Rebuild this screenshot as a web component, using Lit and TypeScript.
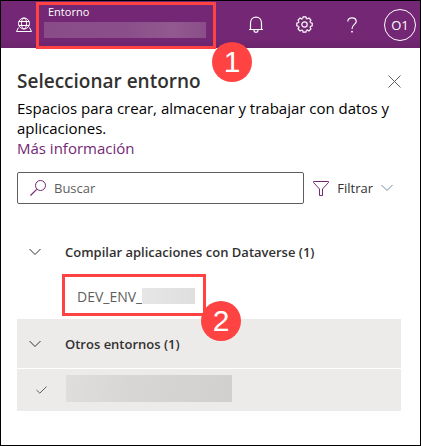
import { LitElement, html, css, svg } from "lit";
import { customElement } from "lit/decorators.js";

const chevron = html`<svg class="chevron" width="12" height="8" viewBox="0 0 12 8" aria-hidden="true">
  <path d="M0.5 1 L6 6.5 L11.5 1" fill="none" stroke="currentColor" />
</svg>`;

const gearTeeth = [0, 45, 90, 135, 180, 225, 270, 315].map(
  (a) => svg`<path transform="rotate(${a} 8.5 8.5)"
    d="M6.6 2.6 L7.1 0.8 H9.9 L10.4 2.6 L11.3 3" />`
);

@customElement("app-header")
export class AppHeader extends LitElement {
  static styles = css`
    :host {
      display: flex;
      align-items: center;
      height: 47px;
      box-sizing: border-box;
      padding: 0 4px 0 15px;
      background: linear-gradient(#742774 80%, #6b246b);
      color: #fff;
    }
    button {
      border: 0;
      padding: 0;
      background: none;
      color: inherit;
      font: inherit;
      cursor: pointer;
    }
    svg {
      display: block;
      fill: none;
      stroke: currentColor;
    }
    .globe {
      flex: none;
      margin-right: 4px;
    }
    .environment {
      position: relative;
      box-sizing: border-box;
      flex: 0 1 180px;
      height: 47px;
      margin-top: 2px;
      border: 3px solid #ff4343;
      text-align: left;
      display: flex;
      flex-direction: column;
      padding: 0 7px 0 5px;
    }
    .label {
      font-size: 11px;
      line-height: 14px;
      padding-left: 4px;
      margin-bottom: 3px;
    }
    .masked {
      height: 16px;
      background: linear-gradient(90deg, #894c89, #8a4f8b 50%, #91598f 80%, #8a4d89);
    }
    .badge {
      position: absolute;
      right: -39px;
      top: 37px;
    }
    .actions {
      flex: 1;
      display: flex;
      align-items: center;
      justify-content: flex-end;
    }
    .action {
      width: 48px;
      height: 47px;
      display: grid;
      place-items: center;
    }
    .avatar {
      box-sizing: border-box;
      width: 32px;
      height: 32px;
      margin-left: 8px;
      border: 1px solid #fff;
      border-radius: 50%;
      font-size: 13px;
    }
  `;

  render() {
    return html`
      <svg class="globe" width="16" height="16" viewBox="0 0 16 16" aria-hidden="true">
        <circle cx="8" cy="6.5" r="5.5" />
        <ellipse cx="8" cy="6.5" rx="2.5" ry="5.5" />
        <path d="M2.8 4.5 H13.2 M2.8 8.5 H13.2 M2.5 10.5 L0.5 14.5 H15.5 L13.5 10.5" />
      </svg>
      <button class="environment">
        <span class="label">Entorno</span>
        <span class="masked"></span>
        <step-badge class="badge" number="1"></step-badge>
      </button>
      <div class="actions">
        <button class="action" aria-label="Notificaciones">
          <svg width="16" height="18" viewBox="0 0 16 18">
            <path d="M1 13.5 H15 M2.5 13.5 V7 C2.5 3.5 5 1.2 8 1.2 S13.5 3.5 13.5 7 V13.5 M6 14 C6 17 10 17 10 14" stroke-width="1.2" />
          </svg>
        </button>
        <button class="action" aria-label="Configuración">
          <svg width="17" height="17" viewBox="0 0 17 17" stroke-width="1.2">
            ${gearTeeth}
            <circle cx="8.5" cy="8.5" r="2.7" />
          </svg>
        </button>
        <button class="action" aria-label="Ayuda">
          <svg width="10" height="16" viewBox="0 0 10 16">
            <path d="M0.8 4.5 C0.8 2 2.5 0.8 5 0.8 S9.2 2.2 9.2 4.4 C9.2 7.5 5 7.5 5 12" stroke-width="1.2" />
            <circle cx="5" cy="14.7" r="0.9" fill="currentColor" stroke="none" />
          </svg>
        </button>
        <button class="avatar">O1</button>
      </div>
    `;
  }
}

@customElement("step-badge")
export class StepBadge extends LitElement {
  static properties = { number: { type: String } };
  declare number: string;

  static styles = css`
    :host {
      display: grid;
      place-items: center;
      width: 40px;
      height: 40px;
      border-radius: 50%;
      background: #ff4343;
      color: #fff;
      font: 30px/40px "Liberation Sans", sans-serif;
      z-index: 1;
    }
  `;

  render() {
    return html`${this.number}`;
  }
}

@customElement("app-root")
export class AppRoot extends LitElement {
  static styles = css`
    :host {
      display: block;
      box-sizing: border-box;
      min-height: 100vh;
      border: 1px solid #000;
      background: #fff;
      color: #323130;
      font-family: "Open Sans", "Noto Sans", sans-serif;
      font-size: 13px;
    }
    button {
      border: 0;
      padding: 0;
      background: none;
      color: inherit;
      font: inherit;
      cursor: pointer;
    }
    svg {
      display: block;
      flex: none;
    }
    main {
      padding: 19px 19px 32px 16px;
    }
    .heading {
      display: flex;
      align-items: center;
      justify-content: space-between;
      margin-bottom: 3px;
    }
    h1 {
      margin: 0;
      font-size: 19px;
      line-height: 28px;
      font-weight: 600;
    }
    p {
      margin: 0 0 14px;
      font-size: 15px;
      line-height: 20px;
      color: #000;
    }
    a {
      display: block;
      width: fit-content;
      color: #742774;
      text-decoration: none;
    }
    .tools {
      display: flex;
      align-items: center;
      gap: 9px;
      padding-right: 8px;
      margin-bottom: 23px;
    }
    .search {
      flex: 1;
      min-width: 0;
      box-sizing: border-box;
      height: 32px;
      display: flex;
      align-items: center;
      gap: 8px;
      padding: 0 12px;
      border: 1px solid #605e5c;
      border-radius: 2px;
      color: #742774;
    }
    input {
      flex: 1;
      min-width: 0;
      border: 0;
      padding: 0;
      outline: 0;
      background: none;
      font: inherit;
      color: #323130;
    }
    input::placeholder {
      color: #605e5c;
      opacity: 1;
    }
    .filter {
      display: flex;
      align-items: center;
      gap: 8px;
    }
    .funnel {
      color: #742774;
    }
    .filter .chevron {
      color: #6b8ca3;
    }
    .list {
      display: flex;
      flex-direction: column;
      gap: 1px;
    }
    .group {
      display: grid;
      grid-template-columns: 12px 1fr;
      align-items: center;
      gap: 24px;
      height: 49px;
      padding: 0 12px;
      text-align: left;
      font-weight: 600;
    }
    .row {
      display: flex;
      align-items: center;
      height: 41px;
      color: #605e5c;
    }
    .shaded {
      background: #edebe9;
    }
    .highlight {
      position: relative;
      box-sizing: border-box;
      display: flex;
      align-items: center;
      width: 144px;
      height: 42px;
      margin: 0 0 6px 45px;
      padding: 4px 8px 0 12px;
      border: 3px solid #ff4343;
    }
    .name {
      flex: 1;
      text-align: left;
      font-size: 14px;
    }
    .masked {
      width: 54px;
      height: 16px;
      margin-bottom: 2px;
      background: linear-gradient(90deg, #e6e6e6, #dfdfdf);
    }
    .badge {
      position: absolute;
      right: -38px;
      top: 24px;
    }
    .selected {
      height: 42px;
      padding-left: 19px;
      gap: 19px;
    }
    .selected .masked {
      width: 166px;
      height: 27px;
      margin-bottom: 4px;
      background: linear-gradient(100deg, #e0dedd, #d8d6d5 40%, #d2d0cf);
    }
  `;

  render() {
    return html`
      <app-header></app-header>
      <main>
        <div class="heading">
          <h1>Seleccionar entorno</h1>
          <button aria-label="Cerrar">
            <svg width="13" height="13" viewBox="0 0 13 13">
              <path d="M0.5 0.5 L12.5 12.5 M12.5 0.5 L0.5 12.5" fill="none" stroke="#605e5c" />
            </svg>
          </button>
        </div>
        <p>
          Espacios para crear, almacenar y trabajar con datos y aplicaciones.
          <a href="#">Más información</a>
        </p>
        <div class="tools">
          <label class="search">
            <svg width="16" height="16" viewBox="0 0 16 16" aria-hidden="true">
              <path d="M0.5 15.5 L6.7 9.3" fill="none" stroke="currentColor" stroke-width="1.2" />
              <circle cx="10.5" cy="5.5" r="5" fill="none" stroke="currentColor" />
            </svg>
            <input type="text" placeholder="Buscar" aria-label="Buscar" />
          </label>
          <button class="filter">
            <svg class="funnel" width="16" height="15" viewBox="0 0 16 15" aria-hidden="true">
              <path d="M0.5 0.5 H15.5 V1.5 L9.5 8 V14.5 H6.5 V8 L0.5 1.5 Z" fill="none" stroke="currentColor" />
            </svg>
            <span>Filtrar</span>
            ${chevron}
          </button>
        </div>
        <div class="list">
          <button class="group">${chevron}<span>Compilar aplicaciones con Dataverse (1)</span></button>
          <div class="row">
            <button class="highlight">
              <span class="name">DEV_ENV_</span>
              <span class="masked"></span>
              <step-badge class="badge" number="2"></step-badge>
            </button>
          </div>
          <button class="group shaded">${chevron}<span>Otros entornos (1)</span></button>
          <button class="row shaded selected">
            <svg width="11" height="8" viewBox="0 0 11 8" aria-hidden="true">
              <path d="M0.5 4 L3.8 7.2 L10.5 0.6" fill="none" stroke="currentColor" />
            </svg>
            <span class="masked"></span>
          </button>
        </div>
      </main>
    `;
  }
}
